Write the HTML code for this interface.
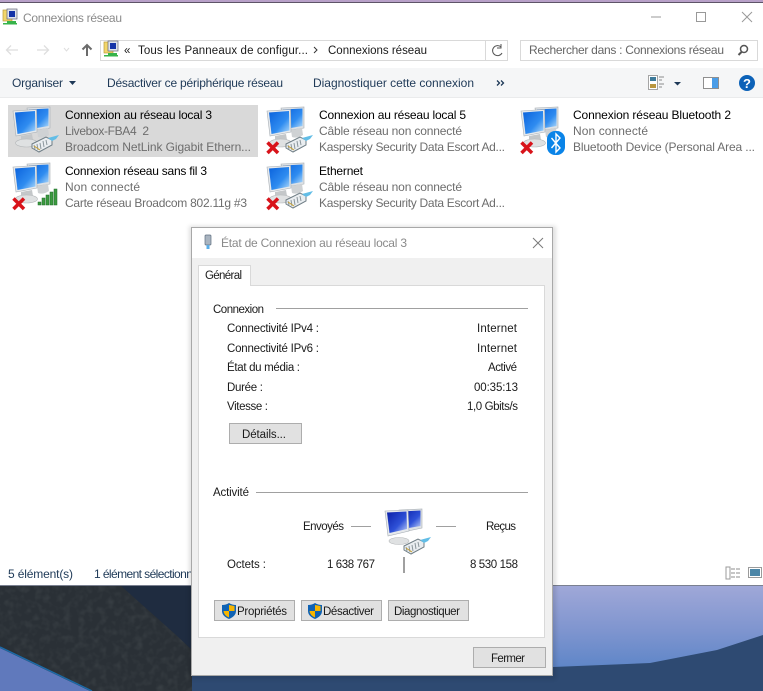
<!DOCTYPE html>
<html lang="fr"><head><meta charset="utf-8"><title>Connexions réseau</title>
<style>
html,body{margin:0;padding:0;width:763px;height:691px;overflow:hidden;background:#fff}
svg{display:block;position:absolute;left:0;top:0}
text{font-family:"Liberation Sans",sans-serif;font-size:12px;white-space:pre}
.k{fill:#000}.g{fill:#6d6d6d}.n{fill:#1e3957}.d{fill:#1a1a1a;font-size:11.5px}
</style></head><body>
<svg xmlns="http://www.w3.org/2000/svg" width="763" height="691" viewBox="0 0 763 691">
<defs>
<linearGradient id="sc" x1="0" y1="0" x2="1" y2="1"><stop offset="0" stop-color="#0a62dc"/><stop offset=".6" stop-color="#2f8cf0"/><stop offset="1" stop-color="#b4dcfa"/></linearGradient>
<linearGradient id="sd" x1="0" y1="0" x2="1" y2="1"><stop offset="0" stop-color="#0a1fa8"/><stop offset=".6" stop-color="#2f52d8"/><stop offset="1" stop-color="#c0d0f8"/></linearGradient>
<linearGradient id="sky" x1="0" y1="0" x2="0" y2="1"><stop offset="0" stop-color="#a0a8d8"/><stop offset=".55" stop-color="#7f95cf"/><stop offset="1" stop-color="#5f86c8"/></linearGradient>
<filter id="noise" x="0" y="0" width="100%" height="100%"><feTurbulence type="fractalNoise" baseFrequency=".14" numOctaves="2" seed="4"/><feColorMatrix values="0 0 0 0 .5 0 0 0 0 .55 0 0 0 0 .52 .9 0 0 0 -.38"/></filter>
<filter id="sh" x="-10%" y="-10%" width="120%" height="120%"><feGaussianBlur stdDeviation="2"/></filter>
<g id="pc">
<path d="M15 0 L38 -1 L38 20 L18 23Z" fill="#dde1e5" stroke="#a8afb5" stroke-width=".6"/>
<path d="M17 1.500 L36.500 .5 L36.500 18 L19 21Z" fill="url(#sc)"/>
<path d="M25 22 L36 20 L37 27 Q31 31 26 29Z" fill="#cfd2d4"/>
<path d="M1 3 L24.500 1.500 L25 24 L4 28Z" fill="#e6e9ec" stroke="#a8afb5" stroke-width=".6"/>
<path d="M3 4.500 L23 3 L23.500 22.500 L5.500 26Z" fill="url(#sc)"/>
<path d="M9 28 L20 26 L21 32 L9 33Z" fill="#c4c7c9"/>
<ellipse cx="14.500" cy="35" rx="11" ry="4" fill="#dfe1e2" stroke="#b4b7b9" stroke-width=".6"/>
</g>
<g id="cable">
<path d="M-1 7 L13 0 L19 3 L19 8 L6 15 L-1 11Z" fill="#e9edf0" stroke="#6f7d85" stroke-width="1"/>
<path d="M1 8 L2 12 M4 7 L5 13 M7 6 L8 12 M10 4 L11 10 M13 3 L14 8" stroke="#8b969c" stroke-width="1" fill="none"/>
<path d="M1 9 L7 13" stroke="#c8a030" stroke-width="1" fill="none"/>
<path d="M15 1 L26 -2 L23 2 L19 4Z" fill="#62bde6"/>
</g>
<g id="x"><path d="M1.500 1.500 L12 12 M12 1.500 L1.500 12" stroke="#d8131a" stroke-width="3.500" fill="none"/></g>
<g id="shield"><path d="M7 0 Q10 2 14 2 L14 8 Q14 13 7 16 Q0 13 0 8 L0 2 Q4 2 7 0Z" fill="#0f62b4"/><path d="M7 2 L12.500 3 L12.500 8 L7 8Z M7 8 L7 14.500 Q2 12.500 1.500 8Z" fill="#f7b500"/></g>
<g id="fold"><rect x="1" y="1" width="9" height="11" fill="#f2d66b" stroke="#b99b3a" stroke-width=".7"/><rect x="5" y="0" width="10" height="10" fill="#dfe3ec" stroke="#667" stroke-width=".7"/><rect x="7" y="2" width="6" height="6" fill="#1533a8"/><rect x="5" y="12" width="9" height="3" fill="#37b34a"/><rect x="1" y="14" width="14" height="1.500" fill="#37b34a"/></g>
</defs>

<!-- wallpaper -->
<rect x="0" y="585" width="763" height="106" fill="#2e4a72"/>
<path d="M190 585 L763 585 L763 635 L717 650 L650 663 L553 667 L400 667 L190 640Z" fill="url(#sky)"/>
<path d="M0 585 L192 585 L192 691 L0 691Z" fill="#2a3036"/>
<rect x="0" y="585" width="192" height="106" filter="url(#noise)" opacity=".22"/>
<path d="M120 585 L192 585 L192 650 L175 634Z" fill="#1f2c40"/>
<path d="M0 648 L90 691 L0 691Z" fill="#6079bc"/>
<path d="M0 647 L92 691" stroke="#1b6aa8" stroke-width="1.500"/>

<!-- top strip and window -->
<rect x="0" y="0" width="763" height="3" fill="#b8a0c8"/>
<rect x="0" y="2" width="763" height="1" fill="#5e5468"/>
<rect x="0" y="3" width="763" height="582" fill="#fff"/>
<rect x="0" y="585" width="763" height="1" fill="#7a8090"/>

<!-- title bar -->
<use href="#fold" x="2" y="9"/>
<text x="23" y="22" fill="#8a8a8a" textLength="99">Connexions réseau</text>
<path d="M651 17 H661" stroke="#999"/>
<rect x="696.500" y="12.500" width="9" height="9" fill="none" stroke="#999"/>
<path d="M742 12 L752 22 M752 12 L742 22" stroke="#999"/>

<!-- nav -->
<path d="M7 50 H18 M11 45.500 L6.500 50 L11 54.500" stroke="#dedede" stroke-width="1.300" fill="none"/>
<path d="M37 50 H48 M44 45.500 L48.500 50 L44 54.500" stroke="#dedede" stroke-width="1.300" fill="none"/>
<path d="M64 48 L66.500 51 L69 48" stroke="#dedede" fill="none"/>
<path d="M87 56 V45 M82.500 49.500 L87 45 L91.500 49.500" stroke="#6b6b6b" stroke-width="2" fill="none"/>
<rect x="100.500" y="40.500" width="385" height="20" fill="#fff" stroke="#d9d9d9"/>
<path d="M485.500 40.500 H507.500 V60.500 H485.500" fill="none" stroke="#d9d9d9"/>
<use href="#fold" x="103" y="41"/>
<text x="124" y="54" class="d" textLength="10">«</text>
<text x="138" y="54" class="d" textLength="170">Tous les Panneaux de configur...</text>
<path d="M314 47 L317 50 L314 53" stroke="#333" fill="none"/>
<text x="328" y="54" class="d" textLength="99">Connexions réseau</text>
<path d="M501 47 A5 5 0 1 0 502 53 M501 44 V48 H497" stroke="#555" fill="none"/>
<rect x="520.500" y="40.500" width="237" height="20" fill="#fff" stroke="#d9d9d9"/>
<text x="529" y="54" fill="#666" textLength="195">Rechercher dans : Connexions réseau</text>
<circle cx="744" cy="49" r="3.500" fill="none" stroke="#555" stroke-width="1.500"/>
<path d="M741.500 52 L738.500 55" stroke="#555" stroke-width="2"/>

<!-- toolbar -->
<rect x="0" y="68" width="763" height="29" fill="#f5f6f7"/>
<rect x="0" y="97" width="763" height="1" fill="#eaebec"/>
<text x="12" y="87" class="n" textLength="51">Organiser</text>
<path d="M69 81 H76 L72.500 85Z" fill="#1e3957"/>
<text x="107" y="87" class="n" textLength="176">Désactiver ce périphérique réseau</text>
<text x="313" y="87" class="n" textLength="161">Diagnostiquer cette connexion</text>
<path d="M497 80.500 L499.500 83 L497 85.500 M501 80.500 L503.500 83 L501 85.500" stroke="#1e3957" stroke-width="1.300" fill="none"/>
<rect x="648.500" y="75.500" width="9" height="14" fill="#fff" stroke="#a5a5a5"/>
<rect x="650" y="77" width="6" height="4" fill="#3d7a9a"/><rect x="650" y="84" width="6" height="4" fill="#b9963f"/>
<path d="M659 77 H664 M659 80 H662 M659 84 H664 M659 87 H662" stroke="#8c8c8c"/>
<path d="M674 82 H681 L677.500 85.500Z" fill="#1e3957"/>
<rect x="703.500" y="77.500" width="15" height="11" fill="#fff" stroke="#8f8f8f"/>
<rect x="712" y="78" width="6" height="10" fill="#4a9de8"/>
<circle cx="747" cy="83" r="8" fill="#0c62b8"/>
<text x="747" y="88" text-anchor="middle" fill="#fff" style="font-size:13px;font-weight:bold">?</text>

<!-- selected -->
<rect x="8" y="105" width="250" height="52" fill="#d9d9d9"/>

<!-- items -->
<use href="#pc" x="12" y="108"/><use href="#cable" x="33" y="137"/>
<text x="65" y="119" class="k" textLength="147">Connexion au réseau local 3</text>
<text x="65" y="135" class="g" textLength="84">Livebox-FBA4  2</text>
<text x="65" y="151" class="g" textLength="186">Broadcom NetLink Gigabit Ethern...</text>

<use href="#pc" x="12" y="164"/><use href="#x" x="12" y="197"/>
<g fill="#3c9a40" stroke="#1f6a28" stroke-width=".5"><rect x="38" y="202" width="3" height="3"/><rect x="42" y="198" width="3" height="7"/><rect x="46" y="195" width="3" height="10"/><rect x="50" y="192" width="3" height="13"/><rect x="54" y="189" width="3" height="16"/></g>
<text x="65" y="175" class="k" textLength="142">Connexion réseau sans fil 3</text>
<text x="65" y="191" class="g" textLength="75">Non connecté</text>
<text x="65" y="207" class="g" textLength="182">Carte réseau Broadcom 802.11g #3</text>

<use href="#pc" x="266" y="108"/><use href="#x" x="266" y="141"/><use href="#cable" x="287" y="137"/>
<text x="319" y="119" class="k" textLength="147">Connexion au réseau local 5</text>
<text x="319" y="135" class="g" textLength="143">Câble réseau non connecté</text>
<text x="319" y="151" class="g" textLength="186">Kaspersky Security Data Escort Ad...</text>

<use href="#pc" x="266" y="164"/><use href="#x" x="266" y="197"/><use href="#cable" x="287" y="193"/>
<text x="319" y="175" class="k" textLength="44">Ethernet</text>
<text x="319" y="191" class="g" textLength="143">Câble réseau non connecté</text>
<text x="319" y="207" class="g" textLength="186">Kaspersky Security Data Escort Ad...</text>

<use href="#pc" x="520" y="108"/><use href="#x" x="520" y="141"/>
<rect x="547" y="131" width="18" height="24" rx="8" fill="#0a84e8"/>
<path d="M551.500 138 L560 148 L556 152 V134 L560 138 L551.500 148" stroke="#fff" stroke-width="1.400" fill="none"/>
<text x="573" y="119" class="k" textLength="158">Connexion réseau Bluetooth 2</text>
<text x="573" y="135" class="g" textLength="75">Non connecté</text>
<text x="573" y="151" class="g" textLength="182">Bluetooth Device (Personal Area ...</text>

<!-- status bar -->
<text x="8" y="578" class="n" textLength="65">5 élément(s)</text>
<text x="94" y="578" class="n" textLength="105">1 élément sélectionné</text>
<rect x="726" y="567" width="4" height="12" fill="#fff" stroke="#9b9b9b"/>
<path d="M731 569 H741 M731 573 H741 M731 577 H741" stroke="#8c8c8c" stroke-dasharray="4 1"/>
<rect x="748.500" y="567.500" width="13" height="10" fill="#fff" stroke="#9b9b9b"/>
<rect x="750" y="569" width="10" height="7" fill="#4d87a8"/>

<!-- dialog -->
<rect x="189" y="226" width="367" height="453" fill="#000" opacity=".12" filter="url(#sh)"/>
<rect x="191.500" y="227.500" width="361" height="448" fill="#f0f0f0" stroke="#a8a8a8"/>
<rect x="192" y="228" width="360" height="30" fill="#fff"/>
<rect x="205" y="235" width="6" height="10" rx="1" fill="#a9b4c0" stroke="#5f6f80" stroke-width=".7"/>
<rect x="206.500" y="245" width="3" height="4" fill="#5aaee8"/>
<text x="221" y="247" fill="#8a8a8a" textLength="186">État de Connexion au réseau local 3</text>
<path d="M533 238 L543 248 M543 238 L533 248" stroke="#7a7a7a"/>

<rect x="198.500" y="285.500" width="346" height="352" fill="#fff" stroke="#d9d9d9"/>
<path d="M198.500 286 V265.500 H250.500 V286" fill="#fff" stroke="#d9d9d9"/>
<rect x="199" y="280" width="51" height="7" fill="#fff"/>
<text x="205" y="279" class="d" textLength="37">Général</text>

<text x="213" y="313" class="d" textLength="51">Connexion</text>
<rect x="276" y="308" width="252" height="1" fill="#a0a0a0"/>
<text x="227" y="332" class="d" textLength="92">Connectivité IPv4 :</text>
<text x="227" y="352" class="d" textLength="92">Connectivité IPv6 :</text>
<text x="227" y="371" class="d" textLength="73">État du média :</text>
<text x="227" y="391" class="d" textLength="36">Durée :</text>
<text x="227" y="410" class="d" textLength="41">Vitesse :</text>
<text x="477" y="332" class="d" textLength="40">Internet</text>
<text x="477" y="352" class="d" textLength="40">Internet</text>
<text x="488" y="371" class="d" textLength="29">Activé</text>
<text x="474" y="391" class="d" textLength="44">00:35:13</text>
<text x="467" y="410" class="d" textLength="51">1,0 Gbits/s</text>
<rect x="229.500" y="423.500" width="72" height="20" fill="#e1e1e1" stroke="#adadad"/>
<text x="242" y="438" class="d" textLength="44">Détails...</text>

<text x="213" y="496" class="d" textLength="36">Activité</text>
<rect x="256" y="492" width="272" height="1" fill="#a0a0a0"/>
<text x="303" y="530" class="d" textLength="41">Envoyés</text>
<rect x="351" y="526" width="20" height="1" fill="#a0a0a0"/>
<rect x="436" y="526" width="20" height="1" fill="#a0a0a0"/>
<text x="486" y="530" class="d" textLength="30">Reçus</text>
<!-- activity icon -->
<path d="M399 510 L422 509 L422 528 L403 532Z" fill="#dde1e5" stroke="#a8afb5" stroke-width=".6"/>
<path d="M401 511.500 L420.500 510.500 L420.500 526 L403 529Z" fill="url(#sd)"/>
<path d="M385 511 L408 510 L409 531 L388 536Z" fill="#e6e9ec" stroke="#a8afb5" stroke-width=".6"/>
<path d="M387 512.500 L406.500 511.500 L407 529 L389.500 533Z" fill="url(#sd)"/>
<ellipse cx="399" cy="541" rx="10" ry="3.500" fill="#dfe1e2" stroke="#b4b7b9" stroke-width=".6"/>
<use href="#cable" x="405" y="539"/>
<text x="227" y="568" class="d" textLength="39">Octets :</text>
<text x="327" y="568" class="d" textLength="48">1 638 767</text>
<rect x="403" y="557" width="2" height="16" fill="#a0a0a0"/>
<text x="470" y="568" class="d" textLength="48">8 530 158</text>

<rect x="214.500" y="600.500" width="80" height="20" fill="#e1e1e1" stroke="#adadad"/>
<use href="#shield" x="222" y="603"/>
<text x="237" y="615" class="d" textLength="50">Propriétés</text>
<rect x="301.500" y="600.500" width="80" height="20" fill="#e1e1e1" stroke="#adadad"/>
<use href="#shield" x="308" y="603"/>
<text x="323" y="615" class="d" textLength="51">Désactiver</text>
<rect x="388.500" y="600.500" width="80" height="20" fill="#e1e1e1" stroke="#adadad"/>
<text x="394" y="615" class="d" textLength="66">Diagnostiquer</text>
<rect x="473.500" y="647.500" width="72" height="20" fill="#e1e1e1" stroke="#adadad"/>
<text x="491" y="662" class="d" textLength="34">Fermer</text>
</svg>
</body></html>
